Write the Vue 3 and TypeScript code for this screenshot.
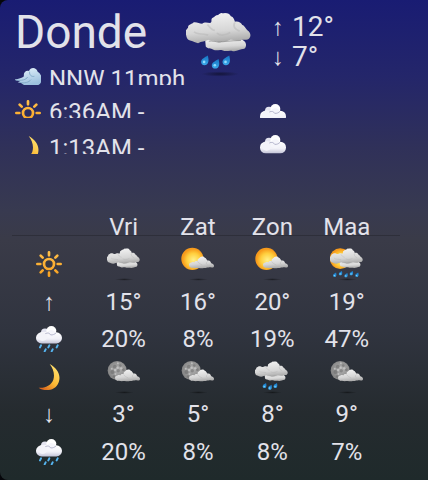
<script setup lang="ts">
interface Cell {
  icon?: string
  text?: string
}
interface Row {
  label: string
  icon?: string
  arrow?: string
  cells: Cell[]
}

const days: string[] = ['Vri', 'Zat', 'Zon', 'Maa']
const icons = (names: string[]): Cell[] => names.map((icon) => ({ icon }))
const texts = (values: string[]): Cell[] => values.map((text) => ({ text }))

const rows: Row[] = [
  { label: 'Dag', icon: 'sun', cells: icons(['cloudy', 'partly', 'partly', 'sun-rain']) },
  { label: 'Maximum', arrow: '↑', cells: texts(['15°', '16°', '20°', '19°']) },
  { label: 'Neerslag overdag', icon: 'rain', cells: texts(['20%', '8%', '19%', '47%']) },
  { label: 'Nacht', icon: 'moon', cells: icons(['moon-cloud', 'moon-cloud', 'showers', 'moon-cloud']) },
  { label: 'Minimum', arrow: '↓', cells: texts(['3°', '5°', '8°', '9°']) },
  { label: 'Neerslag nacht', icon: 'rain', cells: texts(['20%', '8%', '8%', '7%']) },
]
</script>

<template>
  <svg class="sprite" aria-hidden="true">
    <defs>
      <linearGradient id="g-grey" x1="0.4" y1="0" x2="0.6" y2="1">
        <stop offset="0" stop-color="#f2f2f2" />
        <stop offset="0.6" stop-color="#d6d6d6" />
        <stop offset="1" stop-color="#a6a6a6" />
      </linearGradient>
      <linearGradient id="g-white" x1="0" y1="0" x2="0" y2="1">
        <stop offset="0" stop-color="#ffffff" />
        <stop offset="0.6" stop-color="#f0f0f7" />
        <stop offset="1" stop-color="#c3c4d8" />
      </linearGradient>
      <linearGradient id="g-wind" x1="0" y1="0" x2="0.4" y2="1">
        <stop offset="0" stop-color="#e9f6fd" />
        <stop offset="1" stop-color="#9cc0de" />
      </linearGradient>
      <linearGradient id="g-drop" x1="0" y1="0" x2="0" y2="1">
        <stop offset="0" stop-color="#1674c4" />
        <stop offset="1" stop-color="#3aa9ea" />
      </linearGradient>
      <linearGradient id="g-rays" x1="0" y1="0" x2="0" y2="78" gradientUnits="userSpaceOnUse">
        <stop offset="0" stop-color="#ffc04a" />
        <stop offset="1" stop-color="#f8a01f" />
      </linearGradient>
      <linearGradient id="g-moon" x1="0.8" y1="0.1" x2="0.2" y2="1">
        <stop offset="0" stop-color="#ffdf6b" />
        <stop offset="0.55" stop-color="#fbb833" />
        <stop offset="1" stop-color="#d9631e" />
      </linearGradient>
      <radialGradient id="g-sun" cx="0.55" cy="0.55" r="0.5">
        <stop offset="0" stop-color="#fff08a" />
        <stop offset="0.6" stop-color="#ffcf3e" />
        <stop offset="1" stop-color="#f79a1b" />
      </radialGradient>
      <radialGradient id="g-lune" cx="0.55" cy="0.45" r="0.55">
        <stop offset="0" stop-color="#b2b2b2" />
        <stop offset="1" stop-color="#848484" />
      </radialGradient>
      <radialGradient id="g-shadow">
        <stop offset="0" stop-color="#000" stop-opacity="0.45" />
        <stop offset="1" stop-color="#000" stop-opacity="0" />
      </radialGradient>

      <g id="p-shadow"><ellipse cx="122" cy="206" rx="56" ry="8" fill="url(#g-shadow)" /></g>
      <g id="p-double">
        <path d="M77 102 L79 124 C84 132 94 128 102 134 C112 138 120 132 130 136 C142 140 150 134 160 138 C172 140 180 132 194 131 C202 124 200 112 194 108 L184 100 Z" fill="url(#g-grey)" />
        <path d="M20 88 C16 78 22 72 26 68 C26 56 38 58 42 52 C52 50 60 56 68 56 C74 50 84 52 92 54 C100 50 92 42 100 38 C106 36 108 30 116 30 C122 22 130 26 136 24 C146 24 150 26 154 34 C162 36 164 44 166 50 C176 48 184 52 188 60 C196 62 198 72 204 76 C212 82 214 90 211 96 C206 106 196 104 188 104 C176 110 164 102 152 104 C140 110 128 110 118 112 C108 106 96 108 88 104 C76 110 66 108 56 114 C46 112 40 108 32 106 C22 102 22 96 20 88 Z" fill="url(#g-grey)" />
        <path d="M88 108 C104 104 112 114 126 110 C146 108 160 106 184 106" fill="none" stroke="#8a8a8a" stroke-width="3" opacity="0.7" />
        <path d="M84 58 C90 66 96 74 106 76 M166 52 C158 64 168 74 180 78 M44 80 C54 90 72 84 86 90 M112 84 C124 94 142 88 152 82" fill="none" stroke="#b4b4b4" stroke-width="5" opacity="0.45" />
      </g>
      <g id="p-drop">
        <path d="M9 -15 C12 -4 13 6 6 12 C-2 17 -12 12 -11 3 C-9 -6 0 -9 9 -15 Z" fill="url(#g-drop)" />
        <circle cx="-2" cy="4" r="4" fill="#8fdcff" />
      </g>
      <g id="p-puff">
        <path d="M68 124 C64 112 74 106 82 106 C88 100 94 106 100 104 C104 94 112 98 118 98 C116 84 128 84 132 76 C142 68 154 70 160 78 C170 80 170 92 178 96 C188 92 194 102 198 110 C208 112 218 120 213 132 C202 140 192 132 182 136 C172 134 166 142 154 138 C140 144 132 136 116 139 C102 142 98 136 84 138 C76 136 68 132 68 124 Z" fill="url(#g-grey)" />
        <path d="M118 100 C122 112 136 114 146 122 M176 100 C166 106 168 116 176 120" fill="none" stroke="#b4b4b4" stroke-width="5" opacity="0.5" />
      </g>
      <g id="p-cloud">
        <circle cx="27" cy="20" r="12" fill="#e4e4f0" />
        <rect x="0" y="20" width="78" height="35" rx="17" fill="url(#g-white)" />
        <circle cx="20" cy="33" r="14" fill="#f3f3f9" />
        <circle cx="46" cy="15" r="15" fill="#fff" />
        <circle cx="46" cy="26" r="13" fill="#f5f5fb" />
        <path d="M28 24 C36 20 41 23 44 28 C50 29 56 26 60 22" fill="none" stroke="#b4b5cc" stroke-width="3" />
      </g>

      <symbol id="cloudy" viewBox="20 15 200 200"><use href="#p-shadow" /><use href="#p-double" /></symbol>
      <symbol id="showers" viewBox="20 15 200 200">
        <use href="#p-shadow" /><use href="#p-double" />
        <use href="#p-drop" x="76" y="166" /><use href="#p-drop" x="108" y="176" /><use href="#p-drop" x="140" y="166" />
      </symbol>
      <symbol id="partly" viewBox="20 15 200 200">
        <use href="#p-shadow" /><circle cx="87" cy="85" r="65" fill="url(#g-sun)" /><use href="#p-puff" />
      </symbol>
      <symbol id="sun-rain" viewBox="20 15 200 200">
        <use href="#p-shadow" /><circle cx="80" cy="83" r="61" fill="url(#g-sun)" />
        <use href="#p-double" />
        <g transform="scale(0.9)">
          <use href="#p-drop" x="53" y="199" /><use href="#p-drop" x="91" y="188" /><use href="#p-drop" x="127" y="201" />
          <use href="#p-drop" x="162" y="188" /><use href="#p-drop" x="198" y="199" />
        </g>
      </symbol>
      <symbol id="moon-cloud" viewBox="20 15 200 200">
        <use href="#p-shadow" /><circle cx="80" cy="77" r="56" fill="url(#g-lune)" />
        <g fill="#666" opacity="0.5">
          <circle cx="66" cy="54" r="11" /><circle cx="98" cy="48" r="8" /><circle cx="52" cy="86" r="12" />
          <circle cx="86" cy="78" r="10" /><circle cx="116" cy="72" r="8" /><circle cx="62" cy="112" r="8" />
        </g>
        <g fill="#cdcdcd" opacity="0.7">
          <circle cx="82" cy="60" r="7" /><circle cx="68" cy="74" r="7" /><circle cx="104" cy="64" r="7" /><circle cx="48" cy="66" r="6" /><circle cx="70" cy="98" r="6" /><circle cx="84" cy="34" r="6" />
        </g>
        <use href="#p-puff" />
      </symbol>
      <symbol id="sun" viewBox="0 0 78 78">
        <g fill="none" stroke="url(#g-rays)" stroke-linecap="round">
          <circle cx="39" cy="39" r="15" stroke-width="8" />
          <path d="M39 4V13M39.100 65V74M4 39H13M65 39.100H74M14 14L20 20M58 58L64 64M64 14L58 20M20 58L14 64" stroke-width="8" />
        </g>
      </symbol>
      <symbol id="moon" viewBox="0 0 78 78">
        <path d="M41 0 C60 10 73 28 70 47 C67 68 50 79 33 78 C22 78 13 75 8 71 C29 73 46 63 52 47 C57 32 52 14 41 0 Z" fill="url(#g-moon)" />
      </symbol>
      <symbol id="rain" viewBox="0 0 78 78">
        <g transform="scale(1 0.95)"><use href="#p-cloud" /></g>
        <path d="M15 58L12 64M40 58L37 64M65 58L62 64M29 70L26 76M50 70L47 76" stroke="#55b3ee" stroke-width="6" stroke-linecap="round" />
      </symbol>
      <symbol id="cloud" viewBox="0 0 78 78"><g transform="translate(0 12)"><use href="#p-cloud" /></g></symbol>
      <symbol id="wind" viewBox="0 0 78 78">
        <path d="M-3 38 C10 36 20 34 27 28 C24 16 34 8 42 12 C46 0 64 0 68 14 C78 20 84 34 78 46 C72 58 60 56 50 54 C38 58 26 56 20 49 L8 46 L16 42 Z" fill="url(#g-wind)" />
        <path d="M2 39 C20 42 34 38 38 30 M14 46 C28 50 42 46 48 38 M44 14 C42 24 50 30 58 28" fill="none" stroke="#83abc9" stroke-width="3" />
      </symbol>
    </defs>
  </svg>

  <main class="widget">
    <header class="now">
      <div class="place">
        <h1>Donde</h1>
        <div class="strip">
          <svg class="glyph" aria-hidden="true"><use href="#wind" /></svg>
          <span>NNW 11mph</span>
        </div>
      </div>
      <svg class="current" aria-hidden="true"><use href="#showers" /></svg>
      <div class="range">
        <p><span class="arrow">↑</span>12°</p>
        <p><span class="arrow">↓</span>7°</p>
      </div>
    </header>

    <section class="astro">
      <div class="strip">
        <svg class="glyph" aria-hidden="true"><use href="#sun" /></svg>
        <span>6:36AM -</span>
        <svg class="glyph" aria-hidden="true"><use href="#cloud" /></svg>
      </div>
      <div class="strip high">
        <svg class="glyph" aria-hidden="true"><use href="#moon" /></svg>
        <span>1:13AM -</span>
        <svg class="glyph" aria-hidden="true"><use href="#cloud" /></svg>
      </div>
    </section>

    <table class="forecast">
      <thead>
        <tr>
          <td></td>
          <th v-for="day in days" :key="day" scope="col">{{ day }}</th>
        </tr>
      </thead>
      <tbody>
        <tr v-for="row in rows" :key="row.label">
          <th scope="row" :aria-label="row.label">
            <svg v-if="row.icon" class="glyph" aria-hidden="true"><use :href="'#' + row.icon" /></svg>
            <span v-else class="arrow">{{ row.arrow }}</span>
          </th>
          <td v-for="(cell, i) in row.cells" :key="i">
            <svg v-if="cell.icon" class="weather" aria-hidden="true"><use :href="'#' + cell.icon" /></svg>
            <template v-else>{{ cell.text }}</template>
          </td>
        </tr>
      </tbody>
    </table>
  </main>
</template>

<style>
body {
  margin: 0;
  background: #05060a;
}
</style>

<style scoped>
.sprite {
  position: absolute;
  width: 0;
  height: 0;
}

.widget {
  box-sizing: border-box;
  min-height: 100vh;
  border-radius: 8px 0 0 8px;
  background: linear-gradient(#191c73 0%, #24266a 16%, #303159 31%, #383a50 44%, #3a3b48 50%, #30343f 69%, #252b2f 86%, #1f2a2b 100%);
  color: #e2e2ea;
  font: 24px/36px Roboto, "Liberation Sans", sans-serif;
}

.now {
  display: grid;
  grid-template-columns: 171px 67px 1fr;
  align-items: start;
  padding-left: 15px;
}

h1 {
  margin: 0;
  padding-top: 3px;
  font-size: 46px;
  font-weight: 400;
  line-height: 58px;
}

.strip {
  display: grid;
  grid-template-columns: 26px 203px 26px;
  column-gap: 8px;
  height: 24px;
  overflow-y: clip;
  white-space: nowrap;
}

.glyph {
  width: 26px;
  height: 26px;
  overflow: visible;
}

.strip .glyph {
  margin-top: 6px;
}

.strip.high .glyph:last-child {
  margin-top: 1px;
}

.current {
  width: 67px;
  height: 67px;
  margin-top: 10px;
}

.range {
  padding: 12px 0 0 19px;
  font-size: 28px;
  line-height: 30px;
}

.range p {
  display: flex;
  gap: 8px;
  margin: 0;
}

.arrow {
  width: 12px;
  font-family: "Liberation Sans", sans-serif;
  font-size: 24px;
  text-align: center;
}

.astro {
  display: grid;
  gap: 12px;
  padding: 9px 0 54px 15px;
}

.forecast {
  position: relative;
  width: calc(100% - 56px);
  margin-left: 12px;
  border-collapse: collapse;
  table-layout: fixed;
}

.forecast::before {
  content: "";
  position: absolute;
  top: 27px;
  left: 0;
  right: -16px;
  height: 1px;
  background: #2e2f3a;
}

.forecast tr {
  height: 37px;
}

.forecast tbody tr:nth-child(odd) {
  height: 38px;
}

.forecast th,
.forecast td {
  padding: 0;
  font-weight: 400;
  line-height: 36px;
  text-align: center;
  vertical-align: middle;
}

.forecast thead th {
  position: relative;
}

.forecast svg {
  display: block;
  margin: 0 auto;
}

.weather {
  width: 34px;
  height: 34px;
}
</style>
